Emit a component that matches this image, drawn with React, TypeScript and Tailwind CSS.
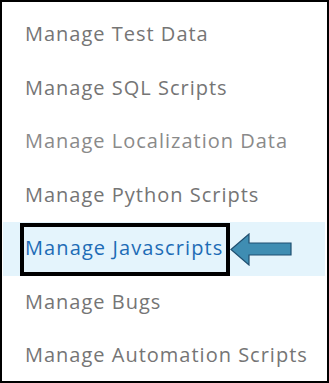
import React from "react";

const items = [
  { label: "Manage Test Data", color: "text-[#757575]" },
  { label: "Manage SQL Scripts", color: "text-[#757575]" },
  { label: "Manage Localization Data", color: "text-[#8a8a8a]" },
  { label: "Manage Python Scripts", color: "text-[#757575]" },
  { label: "Manage Javascripts", color: "text-[#1d6cb6]", active: true },
  { label: "Manage Bugs", color: "text-[#757575]" },
  { label: "Manage Automation Scripts", color: "text-[#757575]" },
];

export default function App() {
  return (
    <div
      className="w-[329px] h-[383px] border-2 border-black bg-white overflow-hidden pt-[6px]"
      style={{ fontFamily: '"Open Sans", sans-serif' }}
    >
      <ul className="flex flex-col">
        {items.map((it) =>
          it.active ? (
            <li
              key={it.label}
              className="relative h-[53.5px] ml-[1px] mr-[2px] bg-[#e4f4fc] flex items-center pl-[22px]"
            >
              <span className={`text-[20px] tracking-[1.1px] leading-none pb-[1px] ${it.color}`}>{it.label}</span>
              <div className="absolute left-[17px] top-[1px] w-[210px] h-[53px] border-4 border-black" />
              <svg
                className="absolute left-[227px] top-[11px]"
                width="62"
                height="33"
                viewBox="0 0 62 33"
              >
                <path
                  d="M1 16.5 L19 1 L19 10 L61 10 L61 22 L19 22 L19 32 Z"
                  fill="#3f8db2"
                  stroke="#1f4f70"
                  strokeWidth="1.2"
                  strokeLinejoin="miter"
                />
              </svg>
            </li>
          ) : (
            <li key={it.label} className="h-[53.5px] flex items-center pl-[23px]">
              <span className={`text-[20px] tracking-[1px] leading-none pb-[1px] ${it.color}`}>{it.label}</span>
            </li>
          )
        )}
      </ul>
    </div>
  );
}
